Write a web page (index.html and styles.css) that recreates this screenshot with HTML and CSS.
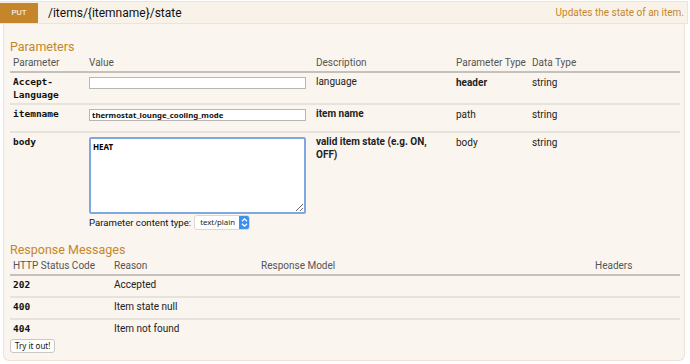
FILE: index.html
```html
<!DOCTYPE html>
<html lang="en">

<head>
  <meta charset="UTF-8">
  <title>PUT /items/{itemname}/state</title>
  <link rel="stylesheet" href="styles.css">
</head>

<body>

  <div class="operation put">
    <div class="heading">
      <span class="http_method">PUT</span>
      <span class="path">/items/{itemname}/state</span>
      <span class="summary">Updates the state of an item.</span>
    </div>

    <div class="content">
      <h4>Parameters</h4>
      <table class="fullwidth params">
        <thead>
          <tr>
            <th class="c-param">Parameter</th>
            <th class="c-value">Value</th>
            <th class="c-desc">Description</th>
            <th class="c-ptype">Parameter Type</th>
            <th>Data Type</th>
          </tr>
        </thead>
        <tbody>
          <tr>
            <td class="code">Accept-<br>Language</td>
            <td><input type="text" class="parameter" value=""></td>
            <td>language</td>
            <td class="strong">header</td>
            <td><span class="model">string</span></td>
          </tr>
          <tr>
            <td class="code required">itemname</td>
            <td><input type="text" class="parameter required" value="thermostat_lounge_cooling_mode"></td>
            <td class="strong">item name</td>
            <td>path</td>
            <td><span class="model">string</span></td>
          </tr>
          <tr class="last">
            <td class="code required">body</td>
            <td>
              <textarea class="body-textarea">HEAT</textarea>
              <div class="content-type">
                <label>Parameter content type:</label>
                <span class="select">
                  <span class="select-text">text/plain</span>
                  <span class="stepper">
                    <svg width="9" height="11" viewBox="0 0 9 11">
                      <path d="M2 4.2 L4.5 1.8 L7 4.2" fill="none" stroke="#fff" stroke-width="1.3"/>
                      <path d="M2 6.8 L4.5 9.2 L7 6.8" fill="none" stroke="#fff" stroke-width="1.3"/>
                    </svg>
                  </span>
                </span>
              </div>
            </td>
            <td class="strong">valid item state (e.g. ON,<br>OFF)</td>
            <td>body</td>
            <td><span class="model">string</span></td>
          </tr>
        </tbody>
      </table>

      <h4 class="responses-title">Response Messages</h4>
      <table class="fullwidth responses">
        <thead>
          <tr>
            <th class="r-code">HTTP Status Code</th>
            <th class="r-reason">Reason</th>
            <th class="r-model">Response Model</th>
            <th>Headers</th>
          </tr>
        </thead>
        <tbody>
          <tr>
            <td class="code">202</td>
            <td>Accepted</td>
            <td></td>
            <td></td>
          </tr>
          <tr>
            <td class="code">400</td>
            <td>Item state null</td>
            <td></td>
            <td></td>
          </tr>
          <tr class="last">
            <td class="code">404</td>
            <td>Item not found</td>
            <td></td>
            <td></td>
          </tr>
        </tbody>
      </table>

      <div class="sandbox_header">
        <button class="submit">Try it out!</button>
      </div>
    </div>
  </div>

</body>

</html>
```

FILE: styles.css
```css
body {
  margin: 0;
  padding-top: 1px;
  font-family: Roboto, "Noto Sans", sans-serif;
  font-size: 10px;
  color: #222;
  background: #fff;
}

.operation {
  width: 688px;
}

/* heading bar */
.heading {
  display: flex;
  align-items: center;
  height: 21px;
  background-color: #f9f2e9;
  border: 1px solid #f0e2d7;
  border-left: 0;
}

.http_method {
  display: flex;
  align-items: center;
  justify-content: center;
  width: 38px;
  height: 20px;
  background-color: #c5862b;
  color: #fff;
  font-size: 8px;
  text-transform: uppercase;
}

.path {
  margin-left: 10px;
  font-size: 12px;
  color: #111;
  flex: 1;
}

.summary {
  color: #c5862b;
  font-size: 10px;
  margin-right: 3px;
}

/* content */
.content {
  margin-left: 3px;
  width: 682px;
  height: 337px;
  background-color: #faf5ee;
  border: 1px solid #f0e2d7;
  border-top: 0;
  border-radius: 0 0 6px 6px;
  padding: 15px 0 0 6px;
  box-sizing: border-box;
}

h4 {
  margin: 0 0 1px;
  font-size: 12.5px;
  font-weight: normal;
  color: #c5862b;
  line-height: 16px;
}

h4.responses-title {
  margin-top: 10px;
}

table.fullwidth {
  width: 670px;
  border-collapse: collapse;
}

th {
  text-align: left;
  font-weight: normal;
  white-space: nowrap;
  color: #555;
  padding: 0 3px 1px;
  line-height: 14px;
  border-bottom: 2px solid #c4c1bc;
}

td {
  padding: 2px 3px;
  vertical-align: top;
  line-height: 13px;
  border-bottom: 2px solid #e6e2dc;
}

tr.last td {
  border-bottom: 0;
}

.code {
  font-family: "DejaVu Sans Mono", monospace;
  font-weight: bold;
  font-size: 9.5px;
  color: #111;
}

.strong {
  font-weight: bold;
}

.model {
  color: #222;
}

.c-param { width: 70px; }
.c-value { width: 221px; }
.c-desc { width: 134px; }
.c-ptype { width: 68px; }

.params td:nth-child(4),
.params td:nth-child(5) {
  padding-top: 3px;
}

input.parameter {
  display: block;
  width: 217px;
  height: 12px;
  box-sizing: border-box;
  border: 1px solid #b7b7b7;
  background: #fff;
  font-family: "Noto Sans", sans-serif;
  font-weight: bold;
  font-size: 7.8px;
  line-height: 10px;
  padding: 0 2px;
  margin: 2px 0 8px;
  color: #111;
}

.body-textarea {
  display: block;
  width: 217px;
  height: 77px;
  box-sizing: border-box;
  border: 2px solid #7fa8e2;
  border-radius: 2px;
  background: #fff;
  font-family: "Noto Sans", sans-serif;
  font-weight: bold;
  font-size: 8px;
  padding: 2px 2px;
  resize: vertical;
  margin-top: 2px;
}

.content-type {
  display: flex;
  align-items: center;
  gap: 3px;
  margin-top: 1px;
}

.content-type label {
  font-size: 9.6px;
  color: #111;
}

.select {
  display: inline-flex;
  align-items: stretch;
  height: 13px;
  background: #fff;
  border: 1px solid #d8d8d8;
  border-radius: 3px;
  overflow: hidden;
}

.select-text {
  font-family: "Noto Sans", sans-serif;
  font-size: 7.8px;
  line-height: 13px;
  padding: 0 4px 0 5px;
  color: #222;
}

.stepper {
  display: flex;
  align-items: center;
  justify-content: center;
  width: 10px;
  background: #3d8ff0;
}

/* responses */
.r-code { width: 95px; }
.r-reason { width: 141px; }
.r-model { width: 328px; }

.responses td {
  padding: 2px 3px 5px;
}

.sandbox_header {
  margin-top: -1px;
}

.submit {
  font-family: "Noto Sans", sans-serif;
  font-size: 8px;
  height: 14px;
  padding: 0 4px;
  background: #fff;
  border: 1px solid #c9c9c9;
  border-radius: 3px;
  color: #111;
  line-height: 12px;
  margin-left: 0;
}
```
